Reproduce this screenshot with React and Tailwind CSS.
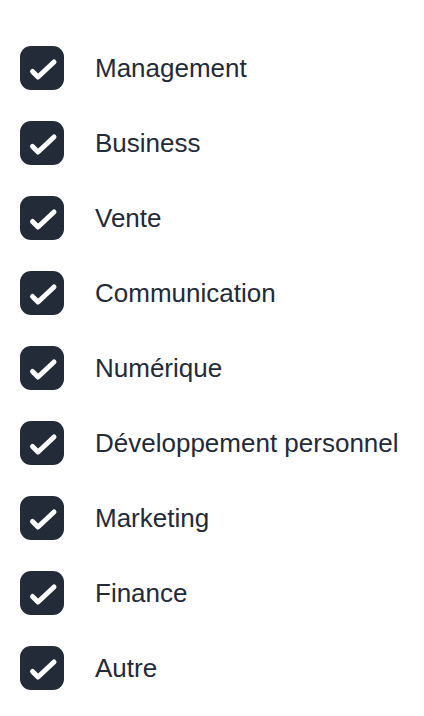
const items = [
  "Management",
  "Business",
  "Vente",
  "Communication",
  "Numérique",
  "Développement personnel",
  "Marketing",
  "Finance",
  "Autre",
];

function Check() {
  return (
    <span className="flex h-[44px] w-[44px] shrink-0 items-center justify-center rounded-[11px] bg-[#232a38]">
      <svg width="44" height="44" viewBox="0 0 44 44" fill="none">
        <path d="M12.5 25.5l5.5 5.5L34 16" stroke="white" strokeWidth="5" strokeLinecap="round" strokeLinejoin="round" />
      </svg>
    </span>
  );
}

export default function App() {
  return (
    <div className="min-h-screen bg-white pl-5 pt-[46px] font-['Liberation_Sans',Arial,sans-serif]">
      <ul className="flex flex-col gap-[31px]">
        {items.map((label) => (
          <li key={label} className="flex items-center gap-[31px]">
            <Check />
            <span className="text-[26px] leading-none text-[#232a38]">{label}</span>
          </li>
        ))}
      </ul>
    </div>
  );
}
